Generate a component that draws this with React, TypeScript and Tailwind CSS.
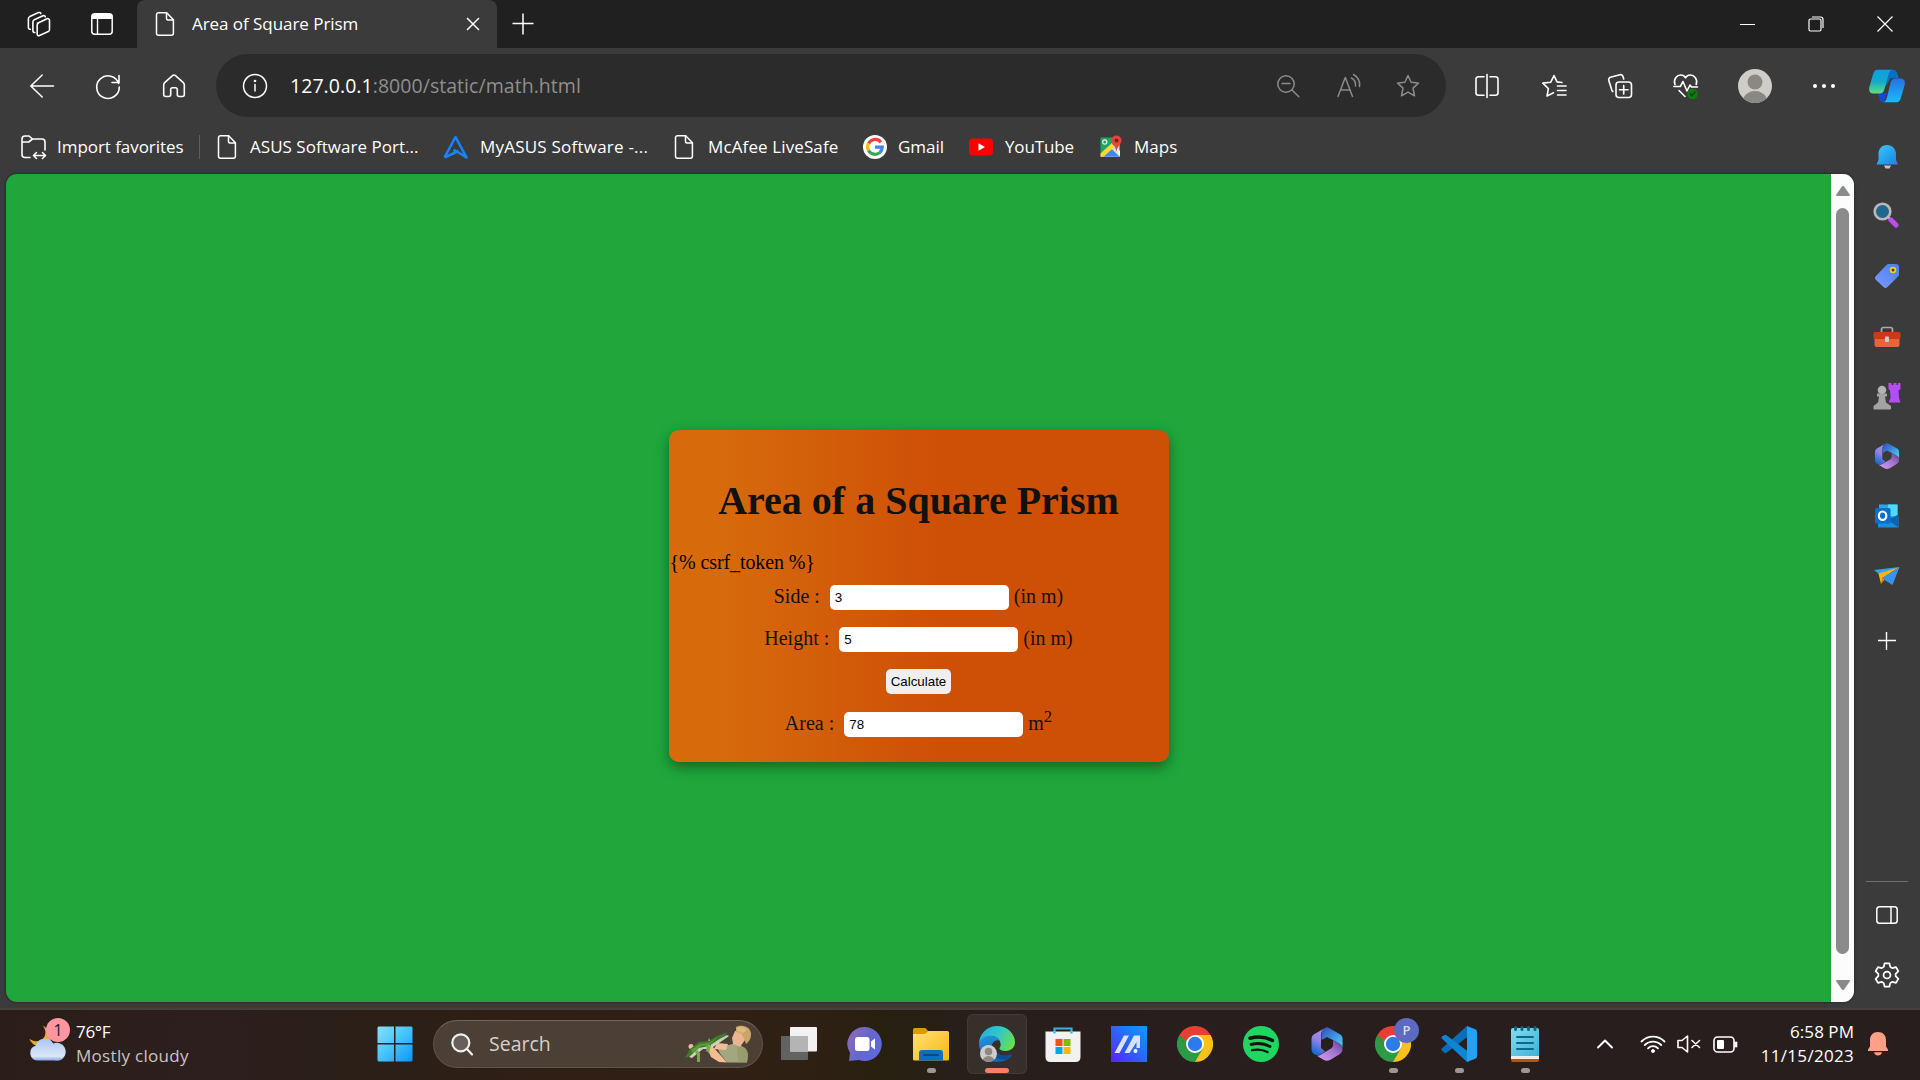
import React from "react";

type Kids = { children?: React.ReactNode };

/* Line icon drawn with the current text colour on a 24 px grid. */
function Line({ children, w = 1.5, size = 24 }: Kids & { w?: number; size?: number }) {
  return (
    <svg width={size} height={size} viewBox="0 0 24 24" fill="none" stroke="currentColor" strokeWidth={w} strokeLinecap="round" strokeLinejoin="round" className="shrink-0 overflow-visible">
      {children}
    </svg>
  );
}

const PageIcon = () => (
  <Line w={1.5}>
    <path d="M5.5 .8h8.2l6.7 7v13.4a2 2 0 0 1-2 2H5.500a2 2 0 0 1-2-2V2.800a2 2 0 0 1 2-2z" />
    <path d="M13.500 1v5.500a1.500 1.500 0 0 0 1.500 1.500h5.200" />
  </Line>
);

const StarPath = "M12 1.500l3.100 6.800 7.300.8-5.400 5 1.500 7.700L12 18.200l-6.500 3.600L7 14.100l-5.400-5 7.300-.8z";

function GoogleG() {
  return (
    <svg width="24" height="24" viewBox="0 0 24 24" className="shrink-0">
      <circle cx="12" cy="12" r="12" fill="#fff" />
      <g fill="none" strokeWidth="3.200">
        <path d="M17.800 7.200A7.300 7.300 0 0 0 5.600 8.500" stroke="#ea4335" />
        <path d="M5.600 8.400a7.300 7.300 0 0 0 0 7.200" stroke="#fbbc05" />
        <path d="M5.600 15.500a7.300 7.300 0 0 0 11.400 1.800" stroke="#34a853" />
        <path d="M12 12.100h7.300a7.300 7.300 0 0 1-2.400 5.300" stroke="#4285f4" />
      </g>
    </svg>
  );
}

function YouTube() {
  return (
    <svg width="24" height="24" viewBox="0 0 24 24" className="shrink-0">
      <rect x="0" y="3.500" width="24" height="17" rx="4" fill="#f00" />
      <path d="M9.500 8.200v7.600l6.500-3.800z" fill="#fff" />
    </svg>
  );
}

function Maps() {
  return (
    <svg width="24" height="24" viewBox="0 0 24 24" className="shrink-0">
      <path d="M1.500 2.500h13l-1 9L1.500 22z" fill="#1fa463" />
      <path d="M2 22L20.500 4v18z" fill="#dadce0" />
      <path d="M3 21.800l8.500-9 9 9z" fill="#4285f4" />
      <path d="M1.500 18.500L13 8l2 4.500L4.500 21.800h-3z" fill="#fdd835" />
      <path d="M16 11l5 5v6z" fill="#fff" />
      <circle cx="5.800" cy="7" r="2.100" fill="none" stroke="#e8f5e9" strokeWidth="1.100" />
      <path d="M17.500 .5a5 5 0 0 1 5 5c0 3.500-4 5-5 11-1-6-5-7.500-5-11a5 5 0 0 1 5-5z" fill="#ea4335" />
      <circle cx="17.500" cy="5.500" r="1.900" fill="#7d1f17" />
    </svg>
  );
}

function Avatar({ size = 34 }: { size?: number }) {
  return (
    <svg width={size} height={size} viewBox="0 0 34 34" className="shrink-0">
      <clipPath id={"av" + size}><circle cx="17" cy="17" r="17" /></clipPath>
      <g clipPath={"url(#av" + size + ")"}>
        <rect width="34" height="34" fill="#d0cdc9" />
        <circle cx="17" cy="13" r="7.500" fill="#8b8783" />
        <ellipse cx="17" cy="33.500" rx="12.500" ry="11.500" fill="#8b8783" />
      </g>
    </svg>
  );
}

function Copilot() {
  return (
    <svg width="36" height="34" viewBox="0 0 36 34" className="shrink-0">
      <defs>
        <linearGradient id="cpA" x1="0" y1="0" x2="0" y2="1">
          <stop offset="0" stopColor="#0e9de8" /><stop offset=".5" stopColor="#14a9c9" /><stop offset="1" stopColor="#5fe07c" />
        </linearGradient>
        <linearGradient id="cpB" x1="0" y1="0" x2="0" y2="1">
          <stop offset="0" stopColor="#2b6fe0" /><stop offset="1" stopColor="#18bdf8" />
        </linearGradient>
      </defs>
      <path d="M20 .8h4c3 0 4 2 4.800 5l.8 3.500h-8L15 20z" fill="#0a6fc0" />
      <path d="M9 24h9l-3 9h-1c-2.500 0-3.500-2-4-4.500z" fill="#1745d6" />
      <path d="M8.500 .8H24c-2.500 0-3.500 1.800-4.500 5L15.500 20c-.9 3-2 4.600-5 4.600H5c-4.500 0-5.500-3-4.500-7L4 5.500C4.900 2.400 6 .8 8.500 .8z" fill="url(#cpA)" />
      <path d="M27.500 33.200H13.500c2.500 0 3.500-1.800 4.500-5L21.500 14c.9-3 2-4.600 5-4.600H31c4.500 0 5.500 3 4.500 7L32 28.500c-.9 3.100-2 4.700-4.500 4.700z" fill="url(#cpB)" />
    </svg>
  );
}

/* Microsoft 365 hexagon: three folded ribbons around an open centre. */
function M365({ size }: { size: number }) {
  const id = "m" + size;
  return (
    <svg width={size} height={size} viewBox="0 0 36 36" className="shrink-0">
      <defs>
        <linearGradient id={id + "a"} x1=".7" y1="0" x2=".4" y2="1">
          <stop offset="0" stopColor="#b58be6" /><stop offset=".5" stopColor="#8f83e2" /><stop offset="1" stopColor="#1668cf" />
        </linearGradient>
        <linearGradient id={id + "b"} x1="0" y1="0" x2="1" y2="1">
          <stop offset="0" stopColor="#2a4fb8" /><stop offset=".5" stopColor="#3f8fe0" /><stop offset="1" stopColor="#4cdcf8" />
        </linearGradient>
        <linearGradient id={id + "c"} x1="0" y1="1" x2="1" y2="0">
          <stop offset="0" stopColor="#d79cf5" /><stop offset=".55" stopColor="#a377cf" /><stop offset="1" stopColor="#5c3a88" />
        </linearGradient>
      </defs>
      <path d="M17 1.500L5 8.300Q2.500 9.800 2.500 12.500v11.500Q2.500 26.500 4.800 28l1.700.8q2.500 1 4.500-.3l5-3-4-3.500V8.500Q12 4 17 1.500z" fill={"url(#" + id + "a)"} />
      <path d="M16 2q2-1.200 4-.1l11 6.300q2.500 1.400 2.500 4V22q0-2.500-2.500-4l-7.500-4.300L18 11l-5.500 3V7.500Q12.500 3.800 16 2z" fill={"url(#" + id + "b)"} />
      <path d="M7.500 29.500q2 .5 4-.8l10.500-6.200q2-1.200 2-3.500v-5l7 4q2.500 1.500 2.500 4.500v1q0 3-2.500 4.500l-9.500 5.700q-3.500 2-7 0z" fill={"url(#" + id + "c)"} />
    </svg>
  );
}

function Chrome() {
  return (
    <svg width="36" height="36" viewBox="0 0 36 36" className="shrink-0">
      <path d="M18 18L2.400 9A18 18 0 0 1 33.600 9z" fill="#ea3d33" />
      <path d="M18 18V9h15.600A18 18 0 0 1 18 36z" fill="#fcc01b" />
      <path d="M10.200 22.500L2.400 9A18 18 0 0 0 18 36l7.800-13.500z" fill="#2d9a48" />
      <path d="M2.400 9L10.200 22.500 18 18V9z" fill="#ea3d33" />
      <path d="M2.400 9l7.800 13.500L14 25l-3-9z" fill="#2d9a48" />
      <circle cx="18" cy="18" r="9" fill="#fff" />
      <circle cx="18" cy="18" r="7.200" fill="#2a7bee" />
    </svg>
  );
}

function Bookmark({ icon, label, cls }: { icon: React.ReactNode; label: string; cls: string }) {
  return (
    <div className={"flex shrink-0 items-center whitespace-nowrap " + cls}>
      {icon}
      <span>{label}</span>
    </div>
  );
}

function TitleBar() {
  return (
    <div className="flex h-12 shrink-0 bg-[#202020] text-white">
      <div className="flex w-[137px] items-center rounded-br-[5px] pl-[27px]">
        <Line w={1.6}>
          <path d="M10.500 11.200l9.500-4.500a1.800 1.800 0 0 1 2.500 1.600v9.500a2 2 0 0 1-1.200 1.800l-8.800 4a1.600 1.600 0 0 1-2.300-1.500v-9a2 2 0 0 1 1.100-1.900z" />
          <path d="M7.800 20.500a1.700 1.700 0 0 1-1.900-1.600V10A2.500 2.500 0 0 1 7.300 7.800l8.700-4a1.700 1.700 0 0 1 2.300 1" />
          <path d="M3.300 17.300a1.700 1.700 0 0 1-1.900-1.600V6.800a2.500 2.500 0 0 1 1.400-2.200l8.700-4a1.700 1.700 0 0 1 2.300 1" />
        </Line>
        <svg width="22" height="22" viewBox="0 0 22 22" className="ml-10">
          <rect x=".8" y=".8" width="20.400" height="20.400" rx="3" fill="none" stroke="#fff" strokeWidth="1.500" />
          <path d="M1 6V3.500Q1 1 3.500 1h15Q21 1 21 3.500V6z" fill="#fff" />
          <path d="M6.500 6v15" stroke="#fff" strokeWidth="1.400" />
        </svg>
      </div>
      <div className="flex w-[360px] items-center rounded-t-lg bg-[#3b3b3b] pl-[16px] pr-[17px] text-[17px]">
        <PageIcon />
        <span className="ml-[15px] flex-1 tracking-[-0.05px]">Area of Square Prism</span>
        <svg width="14" height="14" viewBox="0 0 14 14"><path d="M1 1l12 12M13 1L1 13" stroke="#fff" strokeWidth="1.500" /></svg>
      </div>
      <div className="flex flex-1 items-center pl-[15px]">
        <svg width="22" height="22" viewBox="0 0 22 22"><path d="M11 .500v21M.500 10.500h21" stroke="#fff" strokeWidth="1.500" /></svg>
      </div>
      <div className="flex items-center">
        <div className="flex w-[69px] justify-center"><div className="h-px w-[15px] bg-white" /></div>
        <div className="flex w-[69px] justify-center pr-px">
          <svg width="16" height="16" viewBox="0 0 16 16" fill="none" stroke="#fff" strokeWidth="1.200">
            <rect x="1" y="3" width="12" height="12" rx="1.500" /><path d="M4 1h8.500Q15 1 15 3.500V12" />
          </svg>
        </div>
        <div className="flex w-[69px] justify-center pr-px">
          <svg width="16" height="16" viewBox="0 0 16 16"><path d="M.5 .5l15 15M15.500 .5l-15 15" stroke="#fff" strokeWidth="1.200" /></svg>
        </div>
      </div>
    </div>
  );
}

function Toolbar() {
  return (
    <div className="flex h-[75px] shrink-0 items-center text-white">
      <div className="flex w-[216px] items-center pl-[9px]">
        <div className="flex w-[66px] justify-center"><Line w={1.500}><path d="M23.500 12H.8M12.200 1L.8 12l11.400 11" /></Line></div>
        <div className="flex w-[66px] justify-center"><Line w={1.600}><path d="M22.700 9.500A11.300 11.300 0 1 0 23.300 13M23 1.500v7h-7" /></Line></div>
        <div className="flex w-[66px] justify-center"><Line w={1.600}><path d="M10.500 1.700a2.200 2.200 0 0 1 3 0l7.800 7a2.800 2.800 0 0 1 1 2.100v9.700a2 2 0 0 1-2 2h-3a2 2 0 0 1-2-2v-5a1.700 1.700 0 0 0-1.700-1.700h-3.200a1.700 1.700 0 0 0-1.700 1.700v5a2 2 0 0 1-2 2h-3a2 2 0 0 1-2-2v-9.700a2.800 2.800 0 0 1 1-2.100z" /></Line></div>
      </div>
      <div className="flex h-[63px] w-[1230px] items-center rounded-full bg-[#2b2b2b] pl-[27px] pr-[8px]">
        <Line w={1.500}><circle cx="12" cy="12" r="11.500" /><path d="M12 10.500v6.500" /><circle cx="12" cy="7" r=".6" fill="currentColor" /></Line>
        <span className="ml-[23px] flex-1 text-[19.500px] tracking-[0.05px] text-[#8f8f8f]"><span className="text-white">127.0.0.1</span>:8000/static/math.html</span>
        <div className="flex text-[#8b8b8b]">
          <div className="flex w-[60px] justify-center"><Line w={1.500}><circle cx="10" cy="10" r="8.200" /><path d="M16 16l6.800 6.800M6 9.500h8" /></Line></div>
          <div className="flex w-[60px] justify-center"><Line w={1.500}><path d="M2 22.500L9.300 3.500l7.200 19M5 16h8.700M15.500 4a8 8 0 0 1 4 8M17.500 .5a12 12 0 0 1 6 12" /></Line></div>
          <div className="flex w-[60px] justify-center"><Line w={1.500}><path d={StarPath} /></Line></div>
        </div>
      </div>
      <div className="flex flex-1 items-center pl-[8px]">
        <div className="flex w-[66px] justify-center"><Line w={1.600}><path d="M12 .5v23M9 2.700H3.500A2.500 2.500 0 0 0 1 5.200v13.600a2.500 2.500 0 0 0 2.500 2.500H9M15 2.700h5.500A2.500 2.500 0 0 1 23 5.200v13.600a2.500 2.500 0 0 1-2.500 2.500H15" /></Line></div>
        <div className="flex w-[67px] justify-center"><Line w={1.600}><path d="M20 8.500l-5-.6L12 1.500 8.800 8.200l-8 .9 5.600 5.500L5 22l6.500-3.300M15.500 12H24M15.500 16.500H24M15.500 21H24" /></Line></div>
        <div className="flex w-[66px] justify-center"><Line w={1.600}><rect x="8" y="8" width="15.500" height="15.500" rx="3" /><path d="M15.700 11.500v8.500M11.500 15.700H20M4.800 17.500A3 3 0 0 1 3.500 15L.8 6.500A2.500 2.500 0 0 1 2.500 3.300L11.800.8A2.500 2.500 0 0 1 15 2.500l.7 2.500" /></Line></div>
        <div className="flex w-[66px] justify-center">
          <svg width="26" height="26" viewBox="0 0 26 26" fill="none" stroke="#fff" strokeWidth="1.600" strokeLinecap="round" strokeLinejoin="round" className="overflow-visible">
            <path d="M2 11.500C0 6 4 2 7.800 2c2 0 3.800 1.300 4.700 2.800C13.400 3.300 15.200 2 17.200 2c4 0 7.800 4 6 9.500M.8 13.500h6.500L10 8.500l4 9.500 3-6 1.500 2h6M6 17.500l6 6" />
            <circle cx="19.500" cy="21" r="5.200" fill="#0f7b0f" stroke="none" />
            <path d="M17.300 21l1.700 1.700 3-3.500" stroke="#0a3d0a" strokeWidth="1.300" />
          </svg>
        </div>
        <div className="flex w-[72px] justify-center"><Avatar /></div>
        <div className="flex w-[66px] justify-center gap-[5px]">
          <i className="size-[4px] rounded-full bg-white" /><i className="size-[4px] rounded-full bg-white" /><i className="size-[4px] rounded-full bg-white" />
        </div>
        <div className="flex w-[60px] justify-center"><Copilot /></div>
      </div>
    </div>
  );
}

function BookmarkBar() {
  return (
    <div className="flex h-[51px] shrink-0 items-center pb-[4px] pl-[21px] text-[17px] text-white">
      <Bookmark cls="w-[178px] gap-[12px] tracking-[-0.05px]" label="Import favorites" icon={
        <Line w={1.600}><path d="M9 22.500H4a3 3 0 0 1-3-3V4a3 3 0 0 1 3-3h4l3.500 3H21a3 3 0 0 1 3 3v8M1.200 7h6.500l3.800-3M13 20.500h11M15.500 17.500l-3 3 3 3M21.500 17.500l3 3-3 3" /></Line>} />
      <div className="mr-[15px] h-6 w-px bg-[#606060]" />
      <Bookmark cls="w-[228px] gap-[11px] tracking-[0.03px]" label="ASUS Software Port..." icon={<PageIcon />} />
      <Bookmark cls="w-[229px] gap-[12px] tracking-[0.22px]" label="MyASUS Software -..." icon={
        <svg width="25" height="24" viewBox="0 0 25 24" fill="none" stroke="#1a82fb" strokeWidth="2.600" strokeLinejoin="round"><path d="M1.500 22.500L12.500 2l11 20.500L14 16.500l-3.500-1.500M1.500 22.500l14-6.500" /></svg>} />
      <Bookmark cls="w-[191px] gap-[12px] tracking-[0.12px]" label="McAfee LiveSafe" icon={<PageIcon />} />
      <Bookmark cls="w-[106px] gap-[11px]" label="Gmail" icon={<GoogleG />} />
      <Bookmark cls="w-[130px] gap-[12px] tracking-[-0.15px]" label="YouTube" icon={<YouTube />} />
      <Bookmark cls="gap-[11px]" label="Maps" icon={<Maps />} />
    </div>
  );
}

function Card() {
  const field = "mx-[5px] h-[25px] w-[179px] rounded-[5px] bg-white px-[5px] font-['Liberation_Sans'] text-[13.330px] text-black outline-none";
  return (
    <div className="flex h-[332px] w-[500px] flex-col items-center rounded-[10px] bg-[linear-gradient(to_right,#d76b0c_10%,#d15909_38%,#ce4f06_55%)] font-['Liberation_Serif'] text-[20px] leading-[23px] text-[#191009] shadow-[0_5px_14px_rgba(0,0,0,0.4)]">
      <h1 className="mt-[48px] h-[46px] whitespace-nowrap text-[40px] font-bold leading-[46px] text-[#111]">Area of a Square Prism</h1>
      <div className="mt-[27px] self-start pl-px tracking-[-0.1px] text-black">{"{% csrf_token %}"}</div>
      <div className="mt-[11px] flex h-[25px] items-center whitespace-nowrap">
        <span className="relative -top-[1.5px] mr-[5px]">Side :</span><input className={field} defaultValue="3" /><span className="relative -top-[1.5px]">(in m)</span>
      </div>
      <div className="mt-[17px] flex h-[25px] items-center whitespace-nowrap">
        <span className="relative -top-[1.5px] mr-[5px]">Height :</span><input className={field} defaultValue="5" /><span className="relative -top-[1.5px]">(in m)</span>
      </div>
      <button className="mt-[17px] h-[25px] w-[65px] rounded-[5px] bg-[#efefef] font-['Liberation_Sans'] text-[13.330px] leading-[25px] text-black">Calculate</button>
      <div className="mt-[18px] flex h-[25px] items-center whitespace-nowrap">
        <span className="relative -top-[1.5px] mr-[5px]">Area :</span><input className={field} defaultValue="78" /><span className="relative -top-[1.5px]">m<sup className="-top-[8px] text-[16.670px]">2</sup></span>
      </div>
    </div>
  );
}

function SideCell({ children }: Kids) {
  return <div className="flex h-[60px] w-full shrink-0 items-center justify-center">{children}</div>;
}

function Sidebar() {
  return (
    <div className="flex w-[66px] shrink-0 flex-col items-center text-white">
      <div className="flex flex-col items-center">
        <SideCell>
          <svg width="24" height="26" viewBox="0 0 24 26" className="mt-[2px]">
            <defs><linearGradient id="bl" x1="0" y1="0" x2="1" y2="1"><stop offset="0" stopColor="#3fc8fa" /><stop offset=".75" stopColor="#1c94e8" /><stop offset="1" stopColor="#5b68ee" /></linearGradient></defs>
            <path d="M9 21.500h7l-1.500 3h-4z" fill="#c4c4c4" />
            <path d="M12 1c5.500 0 9 4 9 9v6l2 4.500H1.500L3.500 16v-6c0-5 3-9 8.500-9z" fill="url(#bl)" />
          </svg>
        </SideCell>
        <SideCell>
          <svg width="26" height="26" viewBox="0 0 26 26" className="-mt-[3px] mr-[2px]">
            <path d="M14.500 14.500l3.500 3.500" stroke="#aaa" strokeWidth="2.500" /><path d="M18 18l5 5" stroke="#c04af5" strokeWidth="5" strokeLinecap="round" />
            <circle cx="9.500" cy="9.500" r="7.800" fill="#20678f" stroke="#b8b8b8" strokeWidth="2.600" />
          </svg>
        </SideCell>
        <SideCell>
          <svg width="26" height="26" viewBox="0 0 26 26">
            <defs><linearGradient id="tg" x1="1" y1="0" x2="0" y2="1"><stop offset="0" stopColor="#4a7cfa" /><stop offset="1" stopColor="#7b9cf8" /></linearGradient></defs>
            <path d="M15 1h7q3 0 3 3v7q0 1.500-1 2.500L13.500 24q-2 1.800-4 0L2 17q-2-2 0-4L12.500 2Q13.500 1 15 1z" fill="url(#tg)" />
            <circle cx="19" cy="7" r="2.400" fill="#444" stroke="#f5cf12" strokeWidth="1.800" />
          </svg>
        </SideCell>
        <SideCell>
          <svg width="28" height="22" viewBox="0 0 28 22" className="mt-px">
            <path d="M8.500 7V3.500Q8.500 1.500 10.500 1.500h7q2 0 2 2V7" fill="none" stroke="#aaa" strokeWidth="1.700" />
            <path d="M1.500 12h25v7q0 2-2 2h-21q-2 0-2-2z" fill="#e9643a" /><rect x=".5" y="6" width="27" height="7" rx="1.500" fill="#c93c13" />
            <rect x="12" y="10.500" width="4" height="5.500" rx="1" fill="#ccc" />
          </svg>
        </SideCell>
        <SideCell>
          <svg width="28" height="28" viewBox="0 0 28 28">
            <path d="M15.500 1h3v2h2V1h3v2h1.500V1h2.500v6l-2 1.500L26 16l1.500 4.500H15.500L17.500 16 17 8.500 15.500 7z" fill="#b54df5" />
            <circle cx="9" cy="8" r="4.300" fill="#b2b2b2" /><path d="M4 11.500h10v3h-2l1 6 5 3.500v2.500q0 1-1 1H1.500q-1 0-1-1V24L5 20.500l1-6H4z" fill="#a3a3a3" />
          </svg>
        </SideCell>
        <SideCell><M365 size={28} /></SideCell>
        <SideCell>
          <svg width="26" height="26" viewBox="0 0 26 26">
            <path d="M5 1.500h18.500V14H5z" fill="#28a8ea" /><path d="M14 1.500h9.500V13H14z" fill="#50d9ff" /><path d="M4 14h20.500v10.500H4z" fill="#1490df" /><path d="M24.500 11.500v13L14 17z" fill="#0f62ac" />
            <rect x="1" y="5" width="15.500" height="15.500" rx="1.500" fill="#0a6fca" />
            <ellipse cx="8.600" cy="12.700" rx="3.700" ry="4.200" fill="none" stroke="#fff" strokeWidth="2.200" />
          </svg>
        </SideCell>
        <SideCell>
          <svg width="28" height="22" viewBox="0 0 28 22">
            <path d="M1 5L26.500 2 6 9z" fill="#31a4ee" /><path d="M5.500 8.500L26.500 2 9.500 13 8 19z" fill="#f9b615" /><path d="M9.500 13L26.500 2 19.500 20l-8-5z" fill="#3693f2" /><path d="M8 19l1.500-7 2 3z" fill="#d78a0a" />
          </svg>
        </SideCell>
        <div className="mt-[26px]"><svg width="18" height="18" viewBox="0 0 18 18"><path d="M8.500 0v18M0 8.500h18" stroke="#fff" strokeWidth="1.400" /></svg></div>
      </div>
      <div className="mt-[231px] h-px w-[42px] bg-[#707070]" />
      <div className="mt-[3px]">
        <SideCell><svg width="22" height="18" viewBox="0 0 22 18" fill="none" stroke="#fff" strokeWidth="1.500"><rect x=".8" y=".8" width="20.400" height="16.400" rx="2.800" /><path d="M15 1v16" /></svg></SideCell>
        <SideCell>
          <Line w={1.600} size={26}>
            <circle cx="12" cy="12" r="3.200" />
            <path d="M9.800 1.200h4.400l.8 3.300 2 1.200 3.300-1 2.200 3.800-2.500 2.400v2.200l2.500 2.400-2.200 3.800-3.300-1-2 1.200-.8 3.300H9.800L9 19.500l-2-1.200-3.300 1-2.200-3.800L4 13.100v-2.200L1.500 8.500l2.200-3.800 3.300 1 2-1.200z" />
          </Line>
        </SideCell>
      </div>
    </div>
  );
}

function Task({ children, bar = "", active = false }: Kids & { bar?: string; active?: boolean }) {
  return (
    <div className={"relative mx-[3px] flex h-[60px] w-[60px] items-center justify-center rounded-md " + (active ? "bg-white/7 ring-1 ring-inset ring-white/6" : "")}>
      {children}
      {bar && <i className={"absolute bottom-[1px] h-[5px] rounded-full " + bar} />}
    </div>
  );
}

function Weather() {
  return (
    <div className="flex w-[362px] items-center pl-[28px]">
      <div className="relative h-10 w-[42px]">
        <svg width="38" height="38" viewBox="0 0 40 40">
          <defs><linearGradient id="cl" x1="0" y1="0" x2="0" y2="1"><stop offset="0" stopColor="#a9c6f2" /><stop offset=".8" stopColor="#dbe6f8" /><stop offset="1" stopColor="#7fa2e0" /></linearGradient></defs>
          <path d="M15.500 1.500c3 4 4 9 1 13-3.500 4.500-9 5-15 1 2.500 7 10 10 17 7s9-14-3-21z" fill="#f3a623" />
          <path d="M9 38.500a8 8 0 0 1-1-15.500 10 10 0 0 1 18.500-2.500A9.500 9.500 0 1 1 28 38.500z" fill="url(#cl)" />
        </svg>
        <div className="absolute -top-[6px] left-[18px] flex size-6 items-center justify-center rounded-full bg-[#ff96a2] text-[16px] text-[#2a1518]">1</div>
      </div>
      <div className="ml-[6px] flex flex-col text-[17px] leading-6 text-white">
        <span className="tracking-[-0.3px]">76°F</span>
        <span className="whitespace-nowrap tracking-[0.3px] text-[#c9c4c2]">Mostly cloudy</span>
      </div>
    </div>
  );
}

function SearchBox() {
  return (
    <div className="ml-[2px] mr-[3px] flex h-12 w-[330px] items-center rounded-full border border-[#5f534a] border-t-[#71665e] bg-[#4b3f36] pl-[17px] text-[#d6d0cc]">
      <svg width="22" height="23" viewBox="0 0 22 23" fill="none" stroke="#eef0f2" strokeWidth="2.200" strokeLinecap="round"><circle cx="9.800" cy="9.800" r="8.500" fill="#6a5f58" /><path d="M16 16l5 5.500" /></svg>
      <span className="ml-[16px] w-[196px] text-[19.500px]">Search</span>
      <svg width="66" height="38" viewBox="0 0 66 38">
        <path d="M40 21l11-3 9 5q3 3 3 8l-1 6.500H42l-7-9-3-6z" fill="#a3a77f" />
        <path d="M52 18l8 5q3 3 3 8l-1 6.500h-9z" fill="#8f9468" opacity=".6" />
        <path d="M29 24l12 1 2-6-11-1zM27 21l-3-8-2 10 4 9 8 5 8 .5-8-9z" fill="#f2bd96" />
        <circle cx="6" cy="21.500" r="2.500" fill="#f2bd96" /><path d="M50 6l-3 7 1 6 7 3 5-7V5z" fill="#edb48d" />
        <path d="M51 2c5-3 14-1 15 6 .5 5-2 9-5 11l-2-6-3-5-5-1z" fill="#caa468" /><path d="M52 3c3-2 8-1 10 2l-4 3-6-2z" fill="#dbbb80" />
        <path d="M0 33l5-9 9-7 10-1 8-5 11-4-8 9-9 6-8 1-13 8z" fill="#3f7a2c" /><path d="M4 32l10-9 10-2 9-6 9-5 2 1-10 7-9 6-7 0-11 9z" fill="#c9d3b0" />
        <path d="M12 25l3 3v9h-3v-7l-2-3zM22 20l-1 6 3 2 2-8z" fill="#7aa84f" /><path d="M6 25l9-6 9-1 8-5-8 7-8 1-8 7z" fill="#5f9c3c" />
      </svg>
    </div>
  );
}

function Taskbar() {
  const dot = "w-[9px] bg-[#9c9795]";
  return (
    <div className="flex h-[72px] shrink-0 items-center border-t-2 border-[#463f3b] bg-[linear-gradient(to_right,#2b1e19,#2c1f1e_11%,#2b1f17_20%,#311f15_30%,#2f2014_42%,#28200f_46%,#271f1a_50%,#281e1d_60%,#281e1d)] pb-[2px]">
      <Weather />
      <Task>
        <svg width="36" height="36" viewBox="0 0 36 36">
          <defs><linearGradient id="wn" x1="0" y1="0" x2="36" y2="36" gradientUnits="userSpaceOnUse"><stop offset="0" stopColor="#8be0fa" /><stop offset=".5" stopColor="#45c3fb" /><stop offset="1" stopColor="#0a94fb" /></linearGradient></defs>
          <path d="M1.500 .5H17v16.500H.5V1.500zM18.500 .5h16l1 1V17h-17zM.5 18.500H17V35.500H1.500l-1-1zM18.500 18.500h17v16l-1 1h-16z" fill="url(#wn)" />
        </svg>
      </Task>
      <div className="w-[3px]" />
      <SearchBox />
      <Task>
        <svg width="38" height="36" viewBox="0 0 38 36"><rect x="1" y="10" width="27" height="24" rx="1" fill="#626262" /><rect x="10" y="1" width="27" height="24.500" rx="1" fill="#f2f2f2" /><path d="M10 10h18v15.500H10z" fill="#b4b4b4" /></svg>
      </Task>
      <Task>
        <svg width="36" height="36" viewBox="0 0 36 36">
          <defs><linearGradient id="ch" x1="0" y1=".2" x2="1" y2=".8"><stop offset="0" stopColor="#8d69b8" /><stop offset=".5" stopColor="#6567cf" /><stop offset="1" stopColor="#5c6be0" /></linearGradient></defs>
          <path d="M18 1a17 17 0 1 1-6 33L2 35l1-8A17 17 0 0 1 18 1z" fill="url(#ch)" />
          <rect x="8" y="11" width="14.500" height="14" rx="2.500" fill="#fff" /><path d="M24 15.500l4-3v11l-4-3z" fill="#fff" />
        </svg>
      </Task>
      <Task bar={dot}>
        <svg width="36" height="36" viewBox="0 0 36 36">
          <defs><linearGradient id="fo" x1="0" y1="0" x2="1" y2="1"><stop offset="0" stopColor="#ffe07a" /><stop offset="1" stopColor="#fbb70c" /></linearGradient></defs>
          <path d="M0 3.500Q0 2 1.500 2h11l3 3.500v6H0z" fill="#dd9a05" /><path d="M0 8h12l3.500-3H34.500q1.500 0 1.500 1.500V33q0 1.500-1.500 1.500h-33Q0 34.500 0 33z" fill="url(#fo)" />
          <path d="M6 34.500V27q0-3 3-3h18q3 0 3 3v7.500z" fill="#0a70c4" /><path d="M11 29h14" stroke="#0b4783" strokeWidth="1.800" strokeLinecap="round" />
        </svg>
      </Task>
      <Task active bar="w-6 bg-[#f77f63]">
        <svg width="36" height="36" viewBox="0 0 36 36">
          <defs>
            <linearGradient id="e1" x1="0" y1=".2" x2="1" y2=".6"><stop offset="0" stopColor="#2aa9e8" /><stop offset=".5" stopColor="#34c6c8" /><stop offset="1" stopColor="#66e04c" /></linearGradient>
            <linearGradient id="e2" x1="0" y1="0" x2=".3" y2="1"><stop offset="0" stopColor="#1e98dc" /><stop offset="1" stopColor="#1464b4" /></linearGradient>
          </defs>
          <path d="M0 18C0 8 8 0 18 0s18 7.500 18 16c0 5.500-4 9-9 9-4.500 0-7-1.500-6.500-3 1-1.500 1.500-2.500 1-5-1-5-6-7.500-11-7C6 10.500 2 13 0 18z" fill="url(#e1)" />
          <path d="M0 17.500C2 12.500 6 9.800 11 9.800c5 0 8 2 9.500 4.500-6-1-9 4-7.500 9.500 2 7 10 10 18 5.500q2-1 1.500.5C29 34 24 36 18 36 8 36 0 28 0 17.500z" fill="url(#e2)" />
          <path d="M13 18c-3 9 4 17 14 15.500 3-1.500 5-3.500 6-6-7 3.500-17 2.500-20-9.500z" fill="#0f4c98" />
        </svg>
        <div className="absolute left-[13px] top-[31px]"><Avatar size={17} /></div>
      </Task>
      <Task>
        <svg width="36" height="36" viewBox="0 0 36 36">
          <path d="M9.500 7V2.500h17V7" fill="none" stroke="#37b1e2" strokeWidth="2.200" />
          <path d="M.5 5.500h35V31q0 5-5 5h-25q-5 0-5-5z" fill="#f2f2f2" /><path d="M9.500 7.500v-2M26.500 7.500v-2" stroke="#37b1e2" strokeWidth="2.200" />
          <path d="M10.500 13h7v7h-7z" fill="#f1511b" /><path d="M18.500 13h7v7h-7z" fill="#80bb03" /><path d="M10.500 21h7v7h-7z" fill="#00a4ef" /><path d="M18.500 21h7v7h-7z" fill="#fbb902" />
        </svg>
      </Task>
      <Task>
        <svg width="36" height="36" viewBox="0 0 36 36">
          <defs><linearGradient id="ma" x1="0" y1="1" x2="1" y2="0"><stop offset="0" stopColor="#5b21f8" /><stop offset=".4" stopColor="#3558fa" /><stop offset="1" stopColor="#07a0fb" /></linearGradient></defs>
          <rect width="36" height="36" fill="url(#ma)" />
          <path d="M3.500 27L13 9.500h5L8.500 27zM13.500 27L23 9.500h6V22h-3.500v-6l-7 11z" fill="#d7e3fc" /><circle cx="24.500" cy="25" r="2" fill="#fff" />
        </svg>
      </Task>
      <Task><Chrome /></Task>
      <Task>
        <svg width="36" height="36" viewBox="0 0 36 36"><circle cx="18" cy="18" r="18" fill="#1fd661" /><g fill="none" stroke="#12130f" strokeLinecap="round"><path d="M7 12.200c8-2 16-1.200 22.500 2.300" strokeWidth="3.500" /><path d="M8 18.500c7-1.800 13.500-1 19 2" strokeWidth="2.900" /><path d="M9 24.200c6-1.300 11-.6 15.500 1.900" strokeWidth="2.300" /></g></svg>
      </Task>
      <Task><M365 size={36} /></Task>
      <Task bar={dot}>
        <Chrome />
        <div className="absolute left-[31px] top-[4px] flex size-[25px] items-center justify-center rounded-full bg-[#5c6bc0] text-[13px] font-semibold text-[#d9dcf1]">P</div>
      </Task>
      <Task bar={dot}>
        <svg width="36" height="36" viewBox="0 0 36 36">
          <path d="M26 0L.8 22.500Q0 23.500.8 24.500l2.500 2.300q1 .7 2.200 0L27 10.500z" fill="#0a6fb8" />
          <path d="M26 36L.8 12.500Q0 11.500.8 10.500l2.500-1.300q1-.7 2.200 0L27 25.500z" fill="#0c85d2" />
          <path d="M26 0l8.800 3.500Q36 4 36 5.500v25q0 1.500-1.200 2L26 36z" fill="#25a0f2" />
        </svg>
      </Task>
      <Task bar={dot}>
        <svg width="28" height="36" viewBox="0 0 28 36">
          <defs><linearGradient id="np" x1="0" y1="0" x2="1" y2="1"><stop offset="0" stopColor="#83dcf4" /><stop offset="1" stopColor="#41b1d2" /></linearGradient></defs>
          <path d="M0 32h28v2q0 2-2 2H2q-2 0-2-2z" fill="#b4530d" /><path d="M0 28h28v5H0z" fill="#eee" /><path d="M0 4q0-2 2-2h24q2 0 2 2v26H0z" fill="url(#np)" />
          <path d="M4.500 1.500v2M11 1.500v2M17.500 1.500v2M24 1.500v2" stroke="#0f6683" strokeWidth="3" strokeLinecap="round" /><path d="M6 11h16M6 17h16M6 23h16" stroke="#0a6a8e" strokeWidth="2" strokeLinecap="round" />
        </svg>
      </Task>
      <div className="flex flex-1 items-center text-white">
        <svg width="18" height="12" viewBox="0 0 18 12" className="ml-[38px]" fill="none" stroke="#fff" strokeWidth="1.900" strokeLinecap="round" strokeLinejoin="round"><path d="M2 9.500L9 2.500l7 7" /></svg>
        <svg width="26" height="20" viewBox="0 0 26 20" className="ml-[26px]" fill="none" stroke="#fff" strokeWidth="1.800" strokeLinecap="round"><path d="M1.500 7.500a16 16 0 0 1 23 0M4.800 11a11.500 11.500 0 0 1 16.400 0M8 14.300a7 7 0 0 1 10 0" /><circle cx="13" cy="17" r="1.500" fill="#fff" strokeWidth="1" /></svg>
        <svg width="24" height="20" viewBox="0 0 24 20" className="ml-[11px]" fill="none" stroke="#fff" strokeWidth="1.600" strokeLinecap="round" strokeLinejoin="round"><path d="M1 6.500h4L10.500 2v16L5 13.500H1zM15 6.500l7.500 7M22.500 6.500l-7.500 7" /></svg>
        <svg width="25" height="17" viewBox="0 0 25 17" className="ml-[12px]" fill="none" stroke="#fff" strokeWidth="1.600"><rect x="1" y="1" width="20" height="15" rx="3.500" /><rect x="4" y="4" width="7" height="9" rx="1" fill="#fff" stroke="none" /><path d="M22 6.500h1.500v4H22z" fill="#fff" /></svg>
        <div className="ml-auto flex flex-col items-end whitespace-nowrap text-[17px] leading-6">
          <span className="tracking-[0.05px]">6:58 PM</span><span className="tracking-[0.3px]">11/15/2023</span>
        </div>
        <svg width="20" height="24" viewBox="0 0 20 24" className="ml-[14px] mr-[32px]" fill="#fda083"><path d="M10 0c5 0 8 3.500 8 8v6.500l2 3V19H0v-1.500l2-3V8c0-4.500 3-8 8-8zM6 20.200h8Q13 23.500 10 23.500T6 20.200z" /></svg>
      </div>
    </div>
  );
}

export default function App() {
  return (
    <div className="flex h-[1080px] w-[1920px] flex-col overflow-hidden bg-[#3b3b3b] font-['Open_Sans','Noto_Sans',sans-serif]">
      <TitleBar />
      <Toolbar />
      <div className="flex h-[885px] shrink-0">
        <div className="flex w-[1854px] flex-col">
          <BookmarkBar />
          <div className="ml-[6px] flex h-[828px] overflow-hidden rounded-[11px] bg-[#1fa73c] shadow-[0_0_3px_rgba(0,0,0,0.5)]">
            <div className="flex flex-1 items-center justify-center pb-[1px] pt-[17px]"><Card /></div>
            <div className="flex w-[23px] flex-col items-center bg-[#fcfcfc] py-[12px]">
              <svg width="14" height="10" viewBox="0 0 14 10"><path d="M7 0Q8 0 8.500 1L14 9q0 1-1 1H1Q0 10 0 9L5.500 1Q6 0 7 0z" fill="#8b8b8b" /></svg>
              <div className="mb-[26px] mt-[12px] w-[13px] flex-1 rounded-full bg-[#8b8b8b]" />
              <svg width="14" height="10" viewBox="0 0 14 10"><path d="M7 10Q6 10 5.500 9L0 1Q0 0 1 0h12q1 0 1 1L8.500 9Q8 10 7 10z" fill="#8b8b8b" /></svg>
            </div>
          </div>
        </div>
        <div className="pt-[3px]"><Sidebar /></div>
      </div>
      <Taskbar />
    </div>
  );
}
